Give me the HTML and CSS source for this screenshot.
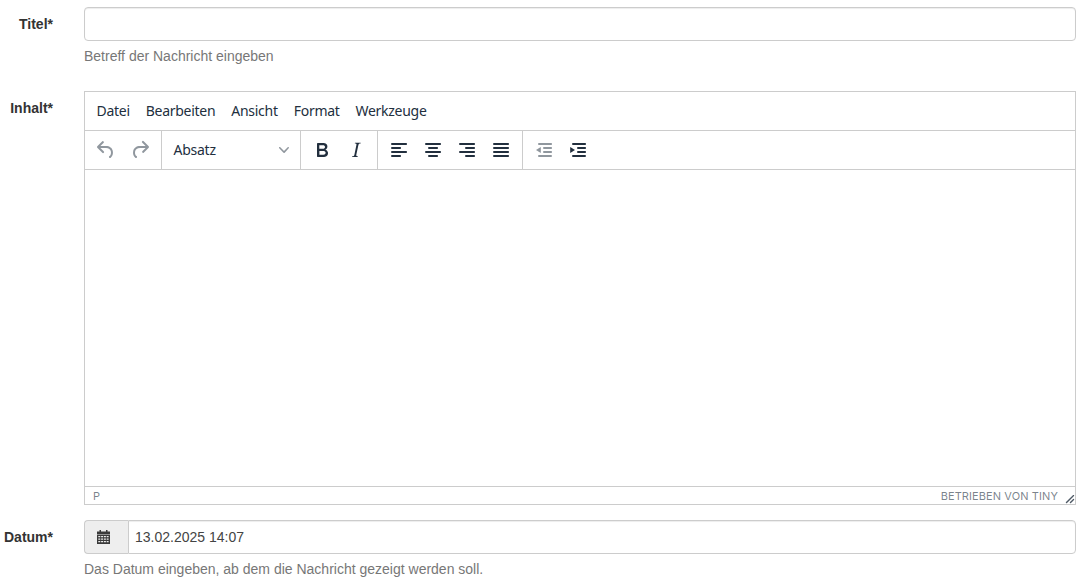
FILE: index.html
```html
<!DOCTYPE html>
<html lang="de">
<head>
<meta charset="utf-8">
<title>Nachricht</title>
<link rel="stylesheet" href="styles.css">
</head>
<body>
<form class="form">
  <div class="row row-title">
    <label class="label">Titel*</label>
    <div class="field">
      <input class="input" type="text">
      <p class="help">Betreff der Nachricht eingeben</p>
    </div>
  </div>
  <div class="row row-content">
    <label class="label">Inhalt*</label>
    <div class="field">
      <div class="editor">
        <div class="menubar">
          <span class="menu-item">Datei</span>
          <span class="menu-item">Bearbeiten</span>
          <span class="menu-item">Ansicht</span>
          <span class="menu-item">Format</span>
          <span class="menu-item">Werkzeuge</span>
        </div>
        <div class="toolbar">
          <div class="group">
            <span class="btn disabled"><svg width="24" height="24" viewBox="0 0 24 24"><path d="M6.4 8H12c3.7 0 6.2 2 6.8 5.1.6 2.7-.4 5.6-2.3 6.8a1 1 0 0 1-1-1.8c1.1-.6 1.8-2.7 1.4-4.6-.5-2.1-2.1-3.500-4.900-3.500H6.400l3.300 3.300a1 1 0 1 1-1.400 1.400l-5-5a1 1 0 0 1 0-1.400l5-5a1 1 0 0 1 1.400 1.400L6.400 8Z"/></svg></span>
            <span class="btn disabled"><svg width="24" height="24" viewBox="0 0 24 24"><path d="M17.600 10H12c-2.800 0-4.400 1.400-4.900 3.500-.4 2 .3 4 1.400 4.600a1 1 0 1 1-1 1.800c-2-1.200-2.900-4.100-2.300-6.800.6-3 3-5.100 6.800-5.100h5.600l-3.300-3.300a1 1 0 1 1 1.400-1.400l5 5a1 1 0 0 1 0 1.400l-5 5a1 1 0 0 1-1.400-1.400l3.300-3.300Z"/></svg></span>
          </div>
          <div class="group">
            <span class="select">Absatz<svg class="chevron" width="10" height="10" viewBox="0 0 10 10"><path d="M8.700 2.200c.3-.3.8-.3 1 0 .4.200.4.700 0 1L5.700 7.800c-.3.300-.9.300-1.200 0L.2 3.200c-.3-.3-.3-.8 0-1 .3-.3.800-.3 1.100 0L5 6l3.700-3.800Z"/></svg></span>
          </div>
          <div class="group">
            <span class="btn"><svg width="24" height="24" viewBox="0 0 24 24"><path d="M7.8 19c-.3 0-.5 0-.6-.2l-.2-.5V5.7c0-.2 0-.4.2-.5l.6-.2h5c1.5 0 2.7.3 3.5 1 .7.6 1.1 1.4 1.1 2.5a3 3 0 0 1-.6 1.9c-.4.6-1 1-1.6 1.2.4.1.9.3 1.3.6s.8.7 1 1.2c.4.4.5 1 .5 1.6 0 1.3-.4 2.3-1.3 3-.8.7-2.1 1-3.8 1H7.8Zm5-8.3c.6 0 1.2-.1 1.6-.5.4-.3.6-.7.6-1.3 0-1.1-.8-1.7-2.3-1.7H9.300v3.500h3.400Zm.5 6c.7 0 1.300-.1 1.700-.4.4-.4.6-.9.6-1.500s-.2-1-.7-1.400c-.4-.3-1-.4-2-.4H9.400v3.800h4Z" fill-rule="evenodd"/></svg></span>
            <span class="btn"><svg width="24" height="24" viewBox="0 0 24 24"><path d="m16.700 4.700-.1.900h-.3c-.6 0-1 0-1.400.3-.3.3-.4.6-.5 1.100l-2.100 9.800v.6c0 .5.4.8 1.400.8h.2l-.2.800H8l.2-.8h.2c1.100 0 1.800-.5 2-1.500l2-9.800.1-.5c0-.6-.4-.8-1.400-.8h-.3l.2-.9h5.800Z"/></svg></span>
          </div>
          <div class="group">
            <span class="btn"><svg width="24" height="24" viewBox="0 0 24 24"><path d="M5 5h14c.6 0 1 .4 1 1s-.4 1-1 1H5a1 1 0 1 1 0-2Zm0 4h8c.6 0 1 .4 1 1s-.4 1-1 1H5a1 1 0 1 1 0-2Zm0 8h8c.6 0 1 .4 1 1s-.4 1-1 1H5a1 1 0 0 1 0-2Zm0-4h14c.6 0 1 .4 1 1s-.4 1-1 1H5a1 1 0 0 1 0-2Z"/></svg></span>
            <span class="btn"><svg width="24" height="24" viewBox="0 0 24 24"><path d="M5 5h14c.6 0 1 .4 1 1s-.4 1-1 1H5a1 1 0 1 1 0-2Zm3 4h8c.6 0 1 .4 1 1s-.4 1-1 1H8a1 1 0 1 1 0-2Zm0 8h8c.6 0 1 .4 1 1s-.4 1-1 1H8a1 1 0 0 1 0-2Zm-3-4h14c.6 0 1 .4 1 1s-.4 1-1 1H5a1 1 0 0 1 0-2Z"/></svg></span>
            <span class="btn"><svg width="24" height="24" viewBox="0 0 24 24"><path d="M5 5h14c.6 0 1 .4 1 1s-.4 1-1 1H5a1 1 0 1 1 0-2Zm6 4h8c.6 0 1 .4 1 1s-.4 1-1 1h-8a1 1 0 0 1 0-2Zm0 8h8c.6 0 1 .4 1 1s-.4 1-1 1h-8a1 1 0 0 1 0-2Zm-6-4h14c.6 0 1 .4 1 1s-.4 1-1 1H5a1 1 0 0 1 0-2Z"/></svg></span>
            <span class="btn"><svg width="24" height="24" viewBox="0 0 24 24"><path d="M5 5h14c.6 0 1 .4 1 1s-.4 1-1 1H5a1 1 0 1 1 0-2Zm0 4h14c.6 0 1 .4 1 1s-.4 1-1 1H5a1 1 0 1 1 0-2Zm0 4h14c.6 0 1 .4 1 1s-.4 1-1 1H5a1 1 0 0 1 0-2Zm0 4h14c.6 0 1 .4 1 1s-.4 1-1 1H5a1 1 0 0 1 0-2Z"/></svg></span>
          </div>
          <div class="group group-last">
            <span class="btn disabled"><svg width="24" height="24" viewBox="0 0 24 24"><path d="M7 5h12c.6 0 1 .4 1 1s-.4 1-1 1H7a1 1 0 1 1 0-2Zm5 4h7c.6 0 1 .4 1 1s-.4 1-1 1h-7a1 1 0 0 1 0-2Zm0 4h7c.6 0 1 .4 1 1s-.4 1-1 1h-7a1 1 0 0 1 0-2Zm-5 4h12a1 1 0 0 1 0 2H7a1 1 0 0 1 0-2Z"/><path d="M8.800 9v6L4 12Z"/></svg></span>
            <span class="btn"><svg width="24" height="24" viewBox="0 0 24 24"><path d="M7 5h12c.6 0 1 .4 1 1s-.4 1-1 1H7a1 1 0 1 1 0-2Zm5 4h7c.6 0 1 .4 1 1s-.4 1-1 1h-7a1 1 0 0 1 0-2Zm0 4h7c.6 0 1 .4 1 1s-.4 1-1 1h-7a1 1 0 0 1 0-2Zm-5 4h12a1 1 0 0 1 0 2H7a1 1 0 0 1 0-2Z"/><path d="M4.200 9v6L9 12Z"/></svg></span>
          </div>
        </div>
        <div class="edit-area"></div>
        <div class="statusbar">
          <span class="path">P</span>
          <span class="branding">BETRIEBEN VON TINY</span>
          <svg class="resize" width="10" height="10" viewBox="0 0 10 10"><path d="M8.100 1.100A.6.600 0 1 1 9 2L2 9A.6.600 0 1 1 1 8l7.100-6.900ZM8.100 5.100A.6.600 0 1 1 9 6L6 9A.6.600 0 1 1 5 8l3.100-2.900Z"/></svg>
        </div>
      </div>
    </div>
  </div>
  <div class="row row-date">
    <label class="label">Datum*</label>
    <div class="field">
      <div class="input-group">
        <span class="addon"><svg width="13" height="14" viewBox="0 0 13 14"><path d="M2.500 0H4v2H2.500zM9 0h1.500v2H9zM0 1.500h13V4H0z"/><path fill-rule="evenodd" d="M0 4.500h13V14H0zM1.300 6v1.300h2V6zm2.800 0v1.300h2V6zm2.800 0v1.300h2V6zm2.800 0v1.300h1.900V6zM1.300 8.500v1.300h2V8.500zm2.800 0v1.300h2V8.500zm2.800 0v1.300h2V8.500zm2.800 0v1.300h1.900V8.500zM1.300 11v1.300h2V11zm2.800 0v1.300h2V11zm2.800 0v1.300h2V11zm2.800 0v1.300h1.900V11z"/></svg></span>
        <input class="input input-date" type="text" value="13.02.2025 14:07">
      </div>
      <p class="help">Das Datum eingeben, ab dem die Nachricht gezeigt werden soll.</p>
    </div>
  </div>
</form>
</body>
</html>
```

FILE: styles.css
```css
* { box-sizing: border-box; }

html, body { margin: 0; padding: 0; }

body {
  background: #fff;
  color: #333;
  font-family: "Liberation Sans", Arial, sans-serif;
  font-size: 14px;
  line-height: 20px;
  overflow: hidden;
}

.form {
  padding: 7px 10px 0 0;
}

.row {
  display: grid;
  grid-template-columns: 53px 1fr;
  column-gap: 31px;
}

.row-title { margin-bottom: 25px; }
.row-content { margin-bottom: 15px; }

.label {
  font-weight: 700;
  text-align: right;
  padding-top: 7px;
}

.input {
  display: block;
  width: 100%;
  height: 34px;
  padding: 6px;
  border: 1px solid #ccc;
  border-radius: 4px;
  background: #fff;
  color: #444;
  font: 14px/20px "Liberation Sans", Arial, sans-serif;
  box-shadow: inset 0 1px 1px rgba(0, 0, 0, .075);
  outline: none;
}

.help {
  margin: 5px 0 0;
  color: #777;
  font-size: 14px;
  line-height: 20px;
}

.editor {
  display: flex;
  flex-direction: column;
  height: 414px;
  border: 1px solid #ccc;
  color: #222f3e;
  font-family: "Noto Sans", sans-serif;
}

.menubar {
  display: flex;
  align-items: center;
  height: 39px;
  padding: 0 3.500px;
  border-bottom: 1px solid #ccc;
}

.menu-item {
  padding: 0 8px;
  font-size: 14px;
  line-height: 20px;
  letter-spacing: -.28px;
}

.toolbar {
  display: flex;
  height: 39px;
  border-bottom: 1px solid #ccc;
}

.group {
  display: flex;
  align-items: center;
  padding: 0 4px;
  border-right: 1px solid #ccc;
}

.group-last { border-right: 0; }

.btn {
  display: flex;
  align-items: center;
  justify-content: center;
  width: 34px;
  height: 34px;
}

.btn svg { fill: #222f3e; }
.btn.disabled svg { fill: rgba(34, 47, 62, .5); }

.select {
  display: flex;
  align-items: center;
  justify-content: space-between;
  width: 130px;
  padding: 0 7px 0 7.500px;
  font-size: 14px;
  letter-spacing: -.25px;
}

.chevron { fill: rgba(34, 47, 62, .5); }

.edit-area { flex: 1; }

.statusbar {
  display: flex;
  align-items: center;
  height: 18px;
  padding: 0 0 0 8px;
  border-top: 1px solid #ccc;
  color: rgba(34, 47, 62, .6);
  font-size: 11px;
  line-height: 16px;
  font-family: Inter, sans-serif;
}

.path { flex: 1; }

.branding {
  margin-right: 7px;
  letter-spacing: .1px;
}

.resize {
  align-self: flex-end;
  fill: rgba(34, 47, 62, .8);
}

.input-group { display: flex; }

.addon {
  display: flex;
  align-items: center;
  flex: 0 0 44px;
  height: 34px;
  padding-left: 12px;
  border: 1px solid #ccc;
  border-right: 0;
  border-radius: 4px 0 0 4px;
  background: #eee;
}

.addon svg { fill: #3a3a3a; }

.input-date {
  flex: 1;
  border-radius: 0 4px 4px 0;
}
```
